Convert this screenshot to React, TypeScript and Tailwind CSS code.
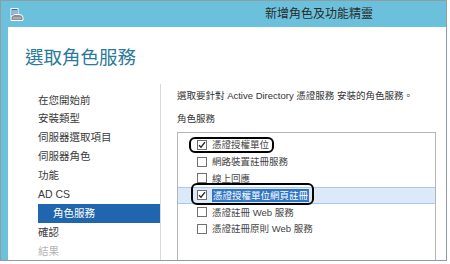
import React from "react";

const NAV: { label: string; active?: boolean; dim?: boolean }[] = [
  { label: "在您開始前" },
  { label: "安裝類型" },
  { label: "伺服器選取項目" },
  { label: "伺服器角色" },
  { label: "功能" },
  { label: "AD CS" },
  { label: "角色服務", active: true },
  { label: "確認" },
  { label: "結果", dim: true },
];

const SERVICES: { label: React.ReactNode; checked?: boolean; selected?: boolean }[] = [
  { label: "憑證授權單位", checked: true },
  { label: "網路裝置註冊服務" },
  { label: "線上回應" },
  { label: "憑證授權單位網頁註冊", checked: true, selected: true },
  { label: "憑證註冊 Web 服務" },
  { label: "憑證註冊原則 Web 服務" },
];

const WizardIcon = () => (
  <svg width="14" height="13" viewBox="0 0 14 13">
    {/* 伺服器 */}
    <rect x="1" y="0.5" width="7" height="8" fill="#2a6db3" stroke="#ffffff" strokeWidth="1" />
    <line x1="2" y1="3" x2="7" y2="3" stroke="#ffffff" strokeWidth="1" />
    <line x1="2" y1="5" x2="7" y2="5" stroke="#ffffff" strokeWidth="1" />
    {/* 底座 */}
    <path d="M1 12.5 V9.5 Q1 6.5 5 6.5 H9 Q13 6.5 13 9.5 V12.5 Z" fill="#8d8f92" stroke="#ffffff" strokeWidth="1" />
    <line x1="3" y1="10" x2="11" y2="10" stroke="#c9cacc" strokeWidth="1" />
  </svg>
);

const CheckBox = ({ checked }: { checked?: boolean }) => (
  <span className="flex h-[10px] w-[10px] shrink-0 items-center justify-center border border-[#707070] bg-white">
    {checked && (
      <svg width="8" height="8" viewBox="0 0 8 8">
        <path d="M1 4.2 L3 6.2 L7 1.2" fill="none" stroke="#222" strokeWidth="1.3" />
      </svg>
    )}
  </span>
);

export default function App() {
  return (
    <div className="relative h-[264px] w-[450px] overflow-hidden bg-white font-['Liberation_Sans','Noto_Sans_CJK_TC',sans-serif]">
      <div className="flex h-[261px] w-[447px] flex-col border border-[#8f9da3] bg-[#6bc1dc]">
        {/* 標題列 */}
        <div className="flex h-[26px] shrink-0 items-center pl-[9px]">
          <WizardIcon />
          <span className="ml-[241px] text-[12px] leading-none text-[#2a2a2a]">新增角色及功能精靈</span>
        </div>

        <div className="ml-[7px] flex min-h-0 flex-1 flex-col bg-white">
          <h1 className="pl-[17px] pt-[21px] text-[18.5px] font-normal leading-[19px] text-[#2b7a9b]">
            選取角色服務
          </h1>

          <div className="mt-[17px] flex min-h-0 flex-1">
            {/* 左側步驟 */}
            <nav className="w-[153px] shrink-0 border-r border-[#d9d9d9] pt-[6.5px]">
              {NAV.map((n) => (
                <div
                  key={n.label}
                  className={`ml-[30px] h-[18.9px] text-[10.5px] leading-[18.9px] ${
                    n.active
                      ? "bg-[#1f66ae] pl-[15px] text-white"
                      : n.dim
                      ? "text-[#b4b4b4]"
                      : "text-[#3a3a3a]"
                  }`}
                >
                  {n.label}
                </div>
              ))}
            </nav>

            {/* 內容 */}
            <div className="flex min-w-0 flex-1 flex-col pl-[16px] pr-[10px]">
              <p className="whitespace-nowrap pt-[4.5px] text-[9.5px] leading-[13px] text-[#333]">
                選取要針對 Active Directory 憑證服務 安裝的角色服務。
              </p>
              <div className="mt-[10px] text-[9.5px] leading-[13px] text-[#333]">角色服務</div>
              <div className="mt-[7.5px] flex-1 border border-b-0 border-[#b3b5b9] pt-[3.5px]">
                {SERVICES.map((s, i) => (
                  <div
                    key={i}
                    className={`flex h-[16.8px] items-center gap-[5px] pl-[19px] text-[9.5px] leading-[13px] ${
                      s.selected ? "border-y border-[#a9c9ee] bg-[#dce9f8]" : ""
                    }`}
                  >
                    <CheckBox checked={s.checked} />
                    <span
                      className={
                        s.selected ? "bg-[#3176c2] px-[1px] text-white" : "text-[#444]"
                      }
                    >
                      {s.label}
                    </span>
                  </div>
                ))}
              </div>
            </div>
          </div>
        </div>
      </div>

      {/* 標註框 */}
      <div className="absolute left-[189px] top-[137px] h-[16px] w-[85px] rounded-[6px] border-2 border-black" />
      <div className="absolute left-[191px] top-[183px] h-[22px] w-[123px] rounded-[6px] border-2 border-black" />
    </div>
  );
}
